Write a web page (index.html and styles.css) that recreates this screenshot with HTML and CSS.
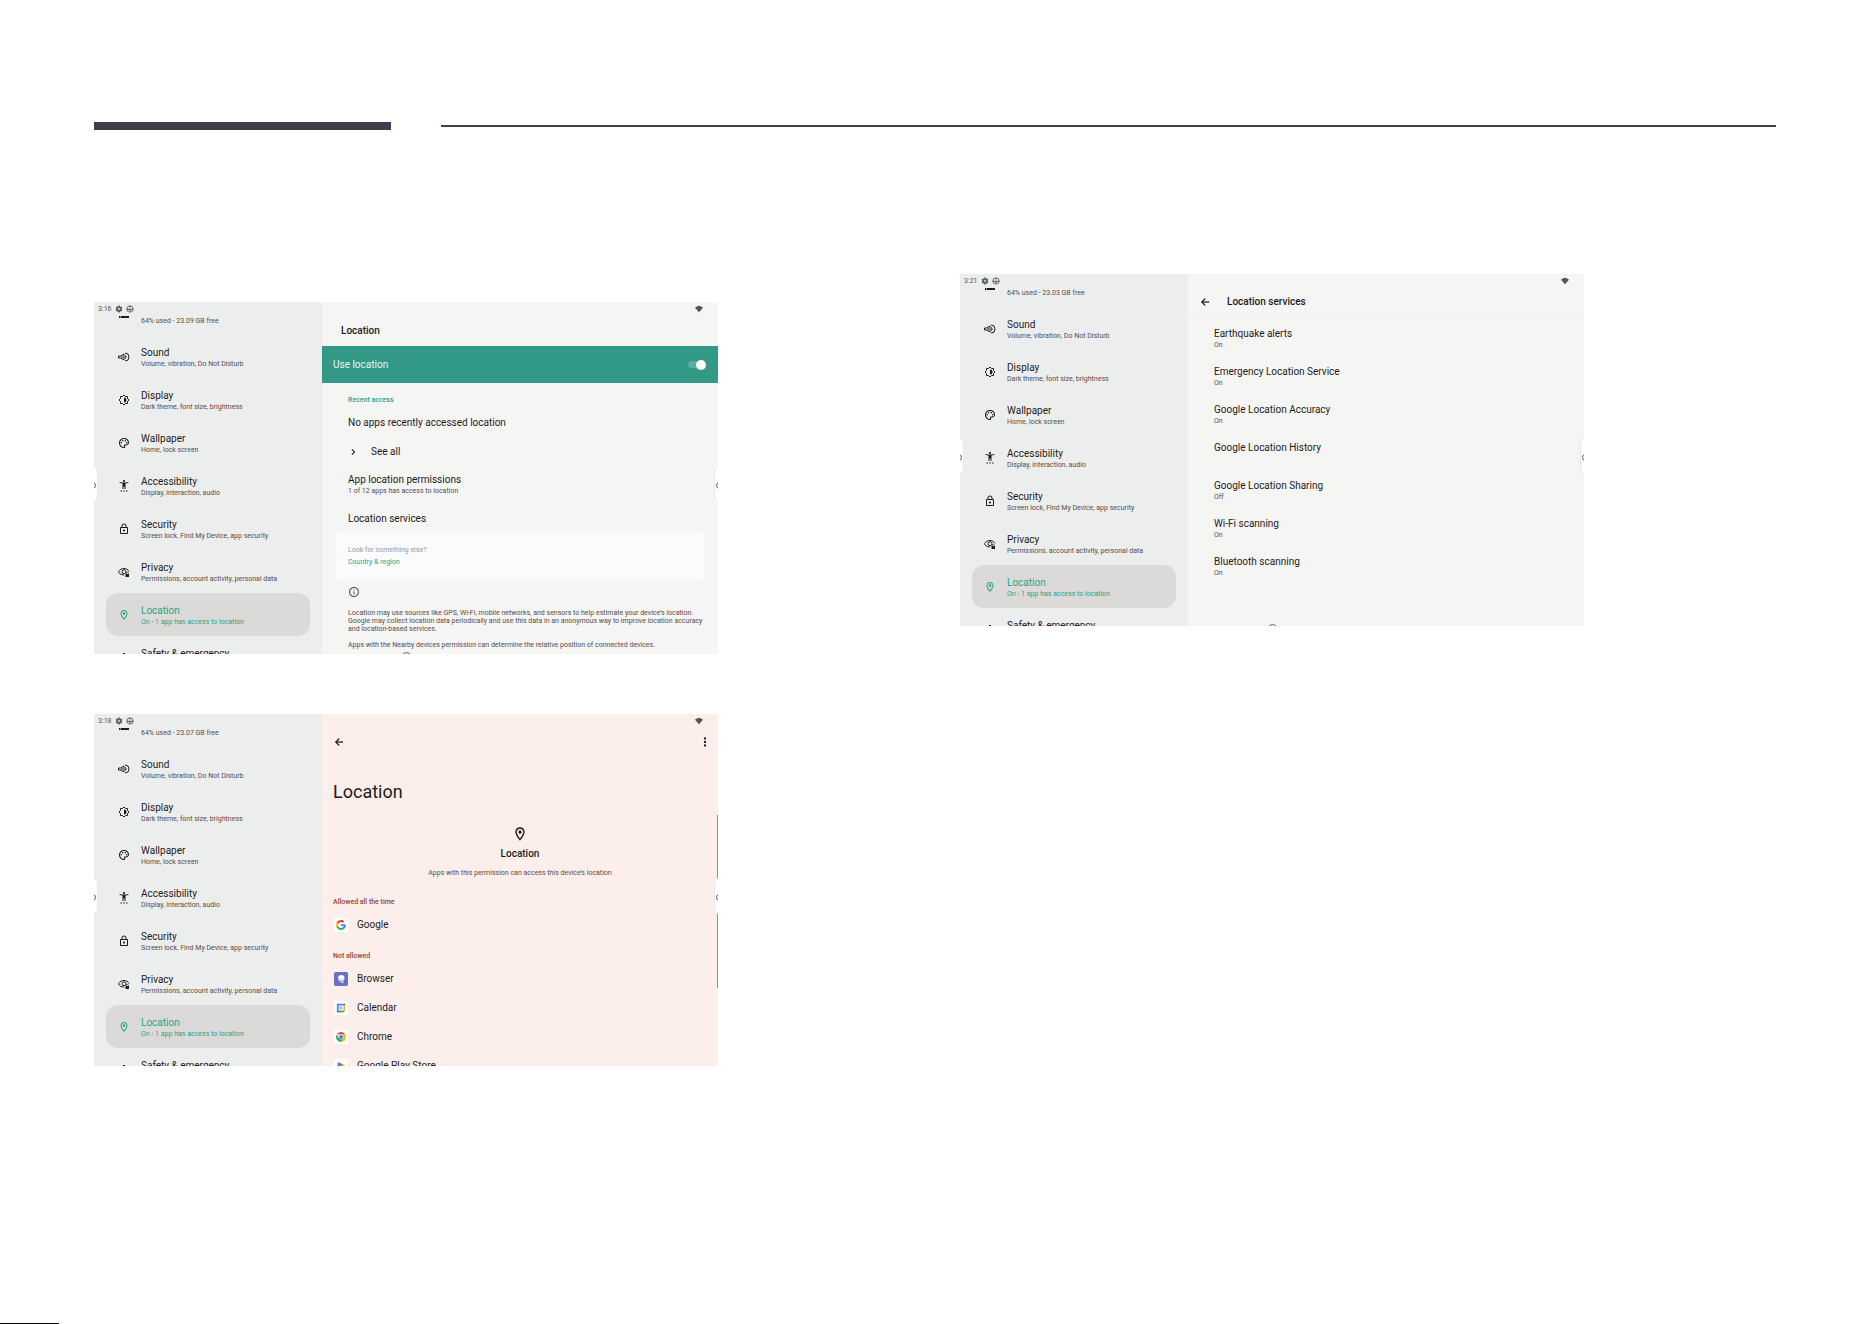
FILE: index.html
```html
<!DOCTYPE html>
<html lang="en">
<head>
    <meta charset="UTF-8">
    <meta name="viewport" content="width=device-width, initial-scale=1.0">
    <title>Location settings</title>
    <link rel="stylesheet" href="styles.css">
</head>
<body>

<!-- shared icons -->
<svg class="sprite" aria-hidden="true">
    <symbol id="gear" viewBox="0 0 24 24"><path d="M19.14 12.94c.04-.3.06-.61.06-.94 0-.32-.02-.64-.07-.94l2.03-1.58c.18-.14.23-.41.12-.61l-1.92-3.32c-.12-.22-.37-.29-.59-.22l-2.39.96c-.5-.38-1.03-.7-1.62-.94l-.36-2.54c-.04-.24-.24-.41-.48-.41h-3.84c-.24 0-.43.17-.47.41l-.36 2.54c-.59.24-1.13.57-1.62.94l-2.39-.96c-.22-.08-.47 0-.59.22L2.740 8.870c-.12.21-.08.47.12.61l2.03 1.58c-.05.3-.09.63-.09.94s.02.64.07.94l-2.030 1.580c-.18.14-.23.41-.12.61l1.920 3.320c.12.22.37.29.59.22l2.390-.96c.5.38 1.030.7 1.620.94l.36 2.540c.05.24.24.41.48.41h3.840c.24 0 .44-.17.47-.41l.36-2.540c.59-.24 1.130-.56 1.620-.94l2.390.96c.22.08.47 0 .59-.22l1.920-3.320c.12-.22.07-.47-.12-.61l-2.010-1.580zM12 15.600c-1.980 0-3.600-1.620-3.600-3.600s1.620-3.600 3.600-3.600 3.600 1.620 3.600 3.600-1.620 3.600-3.600 3.600z" stroke="currentColor" stroke-width="1"/></symbol>
    <symbol id="badge" viewBox="0 0 24 24"><circle cx="12" cy="12" r="9.500" fill="none" stroke="currentColor" stroke-width="2.500"/><path d="M2 11h20v3H2zM9 4h6v3H9zM10 14h4v5h-4z"/></symbol>
    <symbol id="wifi" viewBox="0 0 24 24"><path d="M12 22L0 8C3.500 4.500 7.500 3 12 3s8.500 1.500 12 5z"/></symbol>
    <symbol id="storage" viewBox="0 0 24 24"><path d="M2 20h20v-4H2zm2-3h2v2H4zM2 4v4h20V4zm0 10h20v-4H2z"/></symbol>
    <symbol id="sound" viewBox="0 0 24 24"><path fill="none" stroke="currentColor" stroke-width="2" stroke-linejoin="round" d="M1 10v4h4l7 4V6l-7 4zM14 4a8 8 0 0 1 0 16M14 8.500a4 4 0 0 1 0 7"/><path d="M6 11h4v2H6z"/></symbol>
    <symbol id="display" viewBox="0 0 24 24"><path fill="none" stroke="currentColor" stroke-width="2" stroke-linejoin="round" d="M12 2l3 3h4v4l3 3-3 3v4h-4l-3 3-3-3H5v-4l-3-3 3-3V5h4z"/><path d="M12 7a5 5 0 0 1 0 10z"/></symbol>
    <symbol id="palette" viewBox="0 0 24 24"><path d="M12 22C6.490 22 2 17.510 2 12S6.490 2 12 2s10 4.040 10 9c0 3.310-2.690 6-6 6h-1.770c-.28 0-.5.22-.5.5 0 .12.05.23.13.33.41.47.64 1.060.64 1.670 0 1.380-1.120 2.500-2.500 2.500zm0-18c-4.410 0-8 3.590-8 8s3.590 8 8 8c.28 0 .5-.22.5-.5 0-.16-.08-.28-.14-.35-.41-.46-.63-1.050-.63-1.650 0-1.380 1.120-2.500 2.500-2.500H16c2.210 0 4-1.790 4-4 0-3.860-3.590-7-8-7z"/><circle cx="6.500" cy="11.500" r="1.500"/><circle cx="9.500" cy="7.500" r="1.500"/><circle cx="14.500" cy="7.500" r="1.500"/><circle cx="17.500" cy="11.500" r="1.500"/></symbol>
    <symbol id="person" viewBox="0 0 24 24"><path d="M20.500 4c-2.610.7-5.670 1-8.500 1s-5.890-.3-8.500-1L3 6c1.860.5 4 .83 6 1v11h2v-5h2v5h2V7c2-.17 4.140-.5 6-1zM12 4c1.100 0 2-.9 2-2s-.9-2-2-2-2 .9-2 2 .9 2 2 2zM5 21h3v2H5zm5.500 0h3v2h-3zm5.500 0h3v2h-3z"/></symbol>
    <symbol id="lock" viewBox="0 0 24 24"><path d="M18 8h-1V6c0-2.760-2.240-5-5-5S7 3.240 7 6v2H6c-1.100 0-2 .9-2 2v10c0 1.100.9 2 2 2h12c1.100 0 2-.9 2-2V10c0-1.100-.9-2-2-2zM9 6c0-1.660 1.340-3 3-3s3 1.340 3 3v2H9zm9 14H6V10h12zm-6-3c1.100 0 2-.9 2-2s-.9-2-2-2-2 .9-2 2 .9 2 2 2z"/></symbol>
    <symbol id="eye" viewBox="0 0 24 24"><path fill="none" stroke="currentColor" stroke-width="2" d="M22 11C20 7 16 5 12 5S3 7 1 11.500C3 16 7 18 12 18"/><circle cx="12" cy="11.500" r="4" fill="none" stroke="currentColor" stroke-width="2"/><path d="M15 16h1v-1.500a2.500 2.500 0 0 1 5 0V16h1v6h-7zm2 0h3v-1.500a1.500 1.500 0 0 0-3 0z"/></symbol>
    <symbol id="pin" viewBox="0 0 24 24"><path d="M12 2C8.130 2 5 5.130 5 9c0 5.250 7 13 7 13s7-7.750 7-13c0-3.870-3.130-7-7-7zM7 9c0-2.760 2.240-5 5-5s5 2.240 5 5c0 2.880-2.880 7.190-5 9.880C9.920 16.210 7 11.850 7 9z"/><circle cx="12" cy="9" r="2.500"/></symbol>
    <symbol id="asterisk" viewBox="0 0 24 24"><path d="M10 2h4v6l5-3 2 3.500-5 3.500 5 3.500-2 3.500-5-3v6h-4v-6l-5 3-2-3.500L8 12 3 8.500 5 5l5 3z"/></symbol>
    <symbol id="back" viewBox="0 0 24 24"><path d="M20 11H8l5-5-1.500-1.500L4 12l7.500 7.500L13 18l-5-5h12z" stroke="currentColor" stroke-width="0.500"/></symbol>
    <symbol id="chevron" viewBox="0 0 24 24"><path d="M8.500 6L7 7.500l4.500 4.500L7 16.500 8.500 18l6-6z"/></symbol>
    <symbol id="more" viewBox="0 0 24 24"><circle cx="12" cy="5" r="2.300"/><circle cx="12" cy="12" r="2.300"/><circle cx="12" cy="19" r="2.300"/></symbol>
    <symbol id="info" viewBox="0 0 24 24"><path d="M11 7h2v2h-2zm0 4h2v6h-2zm1-9C6.480 2 2 6.480 2 12s4.480 10 10 10 10-4.480 10-10S17.520 2 12 2zm0 18c-4.410 0-8-3.590-8-8s3.590-8 8-8 8 3.590 8 8-3.590 8-8 8z"/></symbol>
</svg>

<header class="rule">
    <span class="rule-thick"></span>
    <span class="rule-thin"></span>
</header>

<div class="columns">
    <div class="column">

        <section class="screen">
            <aside class="sidebar">
                <div class="status"><span>3:16</span><svg><use href="#gear"/></svg><svg><use href="#badge"/></svg></div>
                <nav>
                    <a href="#"><svg><use href="#storage"/></svg><span><b>Storage</b><small>64% used - 23.09 GB free</small></span></a>
                    <a href="#"><svg><use href="#sound"/></svg><span><b>Sound</b><small>Volume, vibration, Do Not Disturb</small></span></a>
                    <a href="#"><svg><use href="#display"/></svg><span><b>Display</b><small>Dark theme, font size, brightness</small></span></a>
                    <a href="#"><svg><use href="#palette"/></svg><span><b>Wallpaper</b><small>Home, lock screen</small></span></a>
                    <a href="#"><svg><use href="#person"/></svg><span><b>Accessibility</b><small>Display, interaction, audio</small></span></a>
                    <a href="#"><svg><use href="#lock"/></svg><span><b>Security</b><small>Screen lock, Find My Device, app security</small></span></a>
                    <a href="#"><svg><use href="#eye"/></svg><span><b>Privacy</b><small>Permissions, account activity, personal data</small></span></a>
                    <a href="#" class="active"><svg><use href="#pin"/></svg><span><b>Location</b><small>On - 1 app has access to location</small></span></a>
                    <a href="#"><svg><use href="#asterisk"/></svg><span><b>Safety &amp; emergency</b></span></a>
                </nav>
            </aside>
            <main class="content">
                <div class="status status-right"><svg><use href="#wifi"/></svg></div>
                <div class="titlebar"><h1>Location</h1></div>
                <div class="use-location">
                    <label for="use-location">Use location</label>
                    <input type="checkbox" id="use-location" class="switch" checked>
                </div>
                <div class="settings">
                    <h2>Recent access</h2>
                    <p class="item">No apps recently accessed location</p>
                    <a href="#" class="see-all"><svg><use href="#chevron"/></svg>See all</a>
                    <a href="#" class="setting"><b>App location permissions</b><small>1 of 12 apps has access to location</small></a>
                    <a href="#" class="item">Location services</a>
                </div>
                <div class="card">
                    <p>Look for something else?</p>
                    <a href="#">Country &amp; region</a>
                </div>
                <div class="notes">
                    <svg class="info"><use href="#info"/></svg>
                    <p>Location may use sources like GPS, Wi-Fi, mobile networks, and sensors to help estimate your device’s location.<br>Google may collect location data periodically and use this data in an anonymous way to improve location accuracy<br>and location-based services.</p>
                    <p>Apps with the Nearby devices permission can determine the relative position of connected devices.</p>
                </div>
            </main>
            <span class="home-hint"></span>
            <span class="handle handle-left"></span>
            <span class="handle handle-right"></span>
        </section>

        <section class="screen">
            <aside class="sidebar">
                <div class="status"><span>3:18</span><svg><use href="#gear"/></svg><svg><use href="#badge"/></svg></div>
                <nav>
                    <a href="#"><svg><use href="#storage"/></svg><span><b>Storage</b><small>64% used - 23.07 GB free</small></span></a>
                    <a href="#"><svg><use href="#sound"/></svg><span><b>Sound</b><small>Volume, vibration, Do Not Disturb</small></span></a>
                    <a href="#"><svg><use href="#display"/></svg><span><b>Display</b><small>Dark theme, font size, brightness</small></span></a>
                    <a href="#"><svg><use href="#palette"/></svg><span><b>Wallpaper</b><small>Home, lock screen</small></span></a>
                    <a href="#"><svg><use href="#person"/></svg><span><b>Accessibility</b><small>Display, interaction, audio</small></span></a>
                    <a href="#"><svg><use href="#lock"/></svg><span><b>Security</b><small>Screen lock, Find My Device, app security</small></span></a>
                    <a href="#"><svg><use href="#eye"/></svg><span><b>Privacy</b><small>Permissions, account activity, personal data</small></span></a>
                    <a href="#" class="active"><svg><use href="#pin"/></svg><span><b>Location</b><small>On - 1 app has access to location</small></span></a>
                    <a href="#"><svg><use href="#asterisk"/></svg><span><b>Safety &amp; emergency</b></span></a>
                </nav>
            </aside>
            <main class="content permissions">
                <div class="status status-right"><svg><use href="#wifi"/></svg></div>
                <div class="toolbar">
                    <button aria-label="Back"><svg><use href="#back"/></svg></button>
                    <button aria-label="More options"><svg><use href="#more"/></svg></button>
                </div>
                <h1>Location</h1>
                <div class="summary">
                    <svg><use href="#pin"/></svg>
                    <h2>Location</h2>
                    <p>Apps with this permission can access this device’s location</p>
                </div>
                <h3>Allowed all the time</h3>
                <a href="#" class="app">
                    <svg viewBox="0 0 48 48"><rect width="48" height="48" rx="4" fill="#fff"/><g transform="translate(7 7) scale(.71)"><path fill="#ea4335" d="M24 9.500c3.540 0 6.710 1.220 9.210 3.600l6.850-6.850C35.900 2.380 30.470 0 24 0 14.620 0 6.510 5.380 2.560 13.220l7.980 6.190C12.430 13.720 17.740 9.500 24 9.500z"/><path fill="#4285f4" d="M46.980 24.550c0-1.570-.15-3.090-.38-4.550H24v9.020h12.940c-.58 2.960-2.260 5.480-4.780 7.180l7.730 6c4.510-4.180 7.090-10.360 7.090-17.650z"/><path fill="#fbbc05" d="M10.530 28.590c-.48-1.450-.76-2.990-.76-4.590s.27-3.140.76-4.590l-7.980-6.190C.92 16.460 0 20.120 0 24c0 3.880.92 7.540 2.560 10.780z"/><path fill="#34a853" d="M24 48c6.480 0 11.930-2.130 15.890-5.810l-7.730-6c-2.150 1.450-4.920 2.300-8.160 2.300-6.260 0-11.570-4.220-13.470-9.910l-7.980 6.190C6.510 42.620 14.620 48 24 48z"/></g></svg>
                    Google
                </a>
                <h3>Not allowed</h3>
                <a href="#" class="app">
                    <svg viewBox="0 0 48 48"><rect width="48" height="48" rx="6" fill="#6b70c0"/><circle cx="25" cy="21" r="11" fill="#fff"/><path fill="none" stroke="#6b70c0" stroke-width="2" d="M12 21c7 8 16 9 26 5"/><path fill="#fff" d="M20 32c4 3 9 3 13 0v5h-9z"/></svg>
                    Browser
                </a>
                <a href="#" class="app">
                    <svg viewBox="0 0 48 48"><rect width="48" height="48" rx="4" fill="#fff"/><path fill="#4285f4" d="M10 9h24v6H16v18h-6z"/><path fill="#1967d2" d="M34 9h4v6h-4z"/><path fill="#fbbc04" d="M32 15h6v18h-6z"/><path fill="#34a853" d="M16 33h16v6H16z"/><path fill="#188038" d="M10 33h6v6h-6z"/><path fill="#ea4335" d="M32 33h6l-6 6z"/><path fill="#4285f4" d="M20 19h3v10h-3zM26 19h2v10h-2z"/></svg>
                    Calendar
                </a>
                <a href="#" class="app">
                    <svg viewBox="0 0 48 48"><rect width="48" height="48" rx="4" fill="#fff"/><path fill="#ea4335" d="M9.300 15.500a17 17 0 0 1 29.400 0H24z"/><path fill="#fbbc04" d="M38.700 15.500A17 17 0 0 1 24 41l7.400-12.700L24 15.500z"/><path fill="#34a853" d="M9.300 15.500A17 17 0 0 0 24 41l7.400-12.700H16.600z"/><circle cx="24" cy="24" r="8.500" fill="#fff"/><circle cx="24" cy="24" r="7" fill="#4285f4"/></svg>
                    Chrome
                </a>
                <a href="#" class="app">
                    <svg viewBox="0 0 48 48"><rect width="48" height="48" rx="4" fill="#fff"/><path fill="#ea4335" d="M13 9l18 10-6 6z"/><path fill="#4285f4" d="M12 9v30l14-15z"/><path fill="#34a853" d="M13 40l18-11-6-6z"/><path fill="#fbbc04" d="M30 18l9 6-9 6-6-6z"/></svg>
                    Google Play Store
                </a>
            </main>
            <span class="scrollbar"></span>
            <span class="handle handle-left"></span>
            <span class="handle handle-right"></span>
        </section>

    </div>
    <div class="column">

        <section class="screen">
            <aside class="sidebar">
                <div class="status"><span>3:21</span><svg><use href="#gear"/></svg><svg><use href="#badge"/></svg></div>
                <nav>
                    <a href="#"><svg><use href="#storage"/></svg><span><b>Storage</b><small>64% used - 23.03 GB free</small></span></a>
                    <a href="#"><svg><use href="#sound"/></svg><span><b>Sound</b><small>Volume, vibration, Do Not Disturb</small></span></a>
                    <a href="#"><svg><use href="#display"/></svg><span><b>Display</b><small>Dark theme, font size, brightness</small></span></a>
                    <a href="#"><svg><use href="#palette"/></svg><span><b>Wallpaper</b><small>Home, lock screen</small></span></a>
                    <a href="#"><svg><use href="#person"/></svg><span><b>Accessibility</b><small>Display, interaction, audio</small></span></a>
                    <a href="#"><svg><use href="#lock"/></svg><span><b>Security</b><small>Screen lock, Find My Device, app security</small></span></a>
                    <a href="#"><svg><use href="#eye"/></svg><span><b>Privacy</b><small>Permissions, account activity, personal data</small></span></a>
                    <a href="#" class="active"><svg><use href="#pin"/></svg><span><b>Location</b><small>On - 1 app has access to location</small></span></a>
                    <a href="#"><svg><use href="#asterisk"/></svg><span><b>Safety &amp; emergency</b></span></a>
                </nav>
            </aside>
            <main class="content">
                <div class="status status-right"><svg><use href="#wifi"/></svg></div>
                <div class="titlebar titlebar-line">
                    <button aria-label="Back"><svg><use href="#back"/></svg></button>
                    <h1>Location services</h1>
                </div>
                <div class="services">
                    <a href="#" class="setting"><b>Earthquake alerts</b><small>On</small></a>
                    <a href="#" class="setting"><b>Emergency Location Service</b><small>On</small></a>
                    <a href="#" class="setting"><b>Google Location Accuracy</b><small>On</small></a>
                    <a href="#" class="setting"><b>Google Location History</b></a>
                    <a href="#" class="setting"><b>Google Location Sharing</b><small>Off</small></a>
                    <a href="#" class="setting"><b>Wi-Fi scanning</b><small>On</small></a>
                    <a href="#" class="setting"><b>Bluetooth scanning</b><small>On</small></a>
                </div>
            </main>
            <span class="home-hint"></span>
            <span class="handle handle-left"></span>
            <span class="handle handle-right"></span>
        </section>

    </div>
</div>

<footer class="page-foot"></footer>

</body>
</html>
```

FILE: styles.css
```css
* {
    box-sizing: border-box;
}

body {
    display: flex;
    flex-direction: column;
    min-height: 100vh;
    margin: 0;
    background-color: #fff;
    color: #1f1b1b;
    font-family: Roboto, sans-serif;
    font-size: 10px;
    line-height: 12px;
}

h1, h2, h3, p {
    margin: 0;
    font-size: inherit;
    font-weight: 400;
}

a {
    color: inherit;
    text-decoration: none;
}

b {
    font-weight: 400;
}

small {
    color: #574d4b;
    font-size: 7px;
    line-height: 10px;
}

button {
    display: flex;
    padding: 0;
    border: none;
    background: none;
    color: inherit;
    cursor: pointer;
}

svg {
    flex: none;
    width: 12px;
    height: 12px;
    fill: currentColor;
}

.sprite {
    display: none;
}

/* Rule at the top of the page */
.rule {
    display: flex;
    align-items: center;
    gap: 50px;
    padding: 122px 96px 0 94px;
}

.rule-thick {
    width: 297px;
    height: 8px;
    background-color: #403d4c;
}

.rule-thin {
    flex: 1;
    height: 2px;
    background-color: #403d4c;
}

.columns {
    display: grid;
    grid-template-columns: 1fr 1fr;
    gap: 50px;
    padding: 144px 96px 0 94px;
}

.column {
    display: flex;
    flex-direction: column;
    gap: 60px;
}

.column:first-child {
    padding-top: 28px;
}

.page-foot {
    width: 59px;
    height: 1px;
    margin-top: auto;
    border-right: 1px solid #2a00d0;
    background-color: #000;
}

/* Device screen */
.screen {
    position: relative;
    display: flex;
    width: 100%;
    max-width: 624px;
    aspect-ratio: 39 / 22;
    overflow: hidden;
}

.sidebar {
    display: flex;
    flex-direction: column;
    flex: none;
    width: 228px;
    background-color: #eceeed;
}

.status {
    display: flex;
    align-items: center;
    flex: none;
    gap: 3px;
    height: 13px;
    padding-left: 4px;
    color: #555;
    font-size: 7px;
}

.status svg {
    width: 8px;
    height: 8px;
}

.status-right {
    justify-content: flex-end;
    padding-right: 15px;
}

/* The list is scrolled, so its first entry is partly hidden */
.sidebar nav {
    flex: 1;
    min-height: 0;
    padding: 0 12px;
    overflow: hidden;
}

.sidebar nav a {
    display: flex;
    align-items: center;
    gap: 11px;
    height: 43px;
    padding-left: 12px;
}

.sidebar nav a:first-child {
    margin-top: -23px;
}

.sidebar nav span {
    display: flex;
    flex-direction: column;
    height: 20px;
}

.sidebar nav .active {
    border-radius: 12px;
    background-color: #dcdad9;
    color: #27a386;
}

.active small {
    color: inherit;
}

/* Right-hand pane */
.content {
    display: flex;
    flex-direction: column;
    flex: 1;
    min-width: 0;
    height: 100%;
    overflow: hidden;
    background-color: #f5f5f4;
}

.titlebar {
    display: flex;
    align-items: center;
    flex: none;
    height: 31px;
    padding-left: 19px;
}

.titlebar h1 {
    font-weight: 500;
}

.titlebar-line {
    gap: 16px;
    padding-left: 11px;
    border-bottom: 1px solid #f1f1f0;
}

.use-location {
    display: flex;
    align-items: center;
    justify-content: space-between;
    flex: none;
    height: 37px;
    padding: 0 12px 0 11px;
    background-color: #329987;
    color: #e8f8f4;
}

.switch {
    display: flex;
    align-items: center;
    justify-content: flex-end;
    appearance: none;
    width: 18px;
    height: 7px;
    margin: 0;
    border-radius: 4px;
    background-color: #53b1a1;
}

.switch::before {
    content: "";
    flex: none;
    width: 10px;
    height: 10px;
    border-radius: 50%;
    background-color: #fff;
}

.switch:not(:checked) {
    justify-content: flex-start;
}

.settings {
    display: flex;
    flex-direction: column;
    padding: 11px 26px 0;
}

.settings h2 {
    color: #27a386;
    font-size: 7px;
    font-weight: 500;
}

.item {
    margin-top: 11px;
}

.see-all {
    display: flex;
    align-items: center;
    gap: 11px;
    margin: 17px 0 16px;
}

.setting {
    display: flex;
    flex-direction: column;
}

.settings .setting + .item {
    margin-top: 17px;
}

.card {
    flex: none;
    margin: 8px 14px 0 14px;
    padding: 11px 12px;
    border-radius: 4px;
    background-color: #fbfbfb;
    color: #999;
    font-size: 7px;
}

.card a {
    color: #27a386;
}

.notes {
    padding: 7px 12px 0 26px;
    color: #574d4b;
    font-size: 7px;
    line-height: 8px;
}

.notes p {
    margin-bottom: 8px;
    white-space: nowrap;
}

.info {
    display: block;
    margin-bottom: 11px;
}

.services {
    padding: 10px 26px 0;
}

.services .setting {
    height: 38px;
}

/* App permission list */
.permissions {
    background-color: #fceeeb;
}

.toolbar {
    display: flex;
    align-items: center;
    justify-content: space-between;
    flex: none;
    height: 30px;
    padding: 0 7px 0 11px;
}

.permissions h1 {
    padding: 23px 11px 0;
    font-size: 18px;
    line-height: 24px;
}

.summary {
    display: flex;
    flex-direction: column;
    align-items: center;
    padding: 22px 0 6px;
}

.summary svg {
    width: 16px;
    height: 16px;
}

.summary h2 {
    margin: 6px 0 7px;
    font-weight: 500;
}

.summary p {
    color: #574d4b;
    font-size: 7px;
}

.permissions h3 {
    padding: 12px 11px 3px;
    color: #97412f;
    font-size: 7px;
    font-weight: 500;
    line-height: 10px;
}

.app {
    display: flex;
    align-items: center;
    flex: none;
    gap: 9px;
    height: 29px;
    padding-left: 12px;
}

.app svg {
    width: 14px;
    height: 14px;
}

/* Overlays on the edge of a screen */
.handle {
    position: absolute;
    top: 163px;
    width: 14px;
    height: 38px;
    border: 1px solid #e8e8e8;
    border-radius: 7px;
    background-color: #fff;
}

.handle::before {
    content: "";
    position: absolute;
    top: 16px;
    width: 5px;
    height: 5px;
    border: 1px solid #555;
    border-radius: 50%;
}

.handle-left {
    left: -10px;
}

.handle-left::before {
    right: 1px;
}

.handle-right {
    right: -10px;
}

.handle-right::before {
    left: 1px;
}

.home-hint {
    position: absolute;
    top: 350px;
    left: 308px;
    width: 9px;
    height: 9px;
    border: 1px solid #666;
    border-radius: 50%;
}

.scrollbar {
    position: absolute;
    top: 101px;
    right: 0;
    width: 1px;
    height: 173px;
    background-color: #988a88;
}
```
